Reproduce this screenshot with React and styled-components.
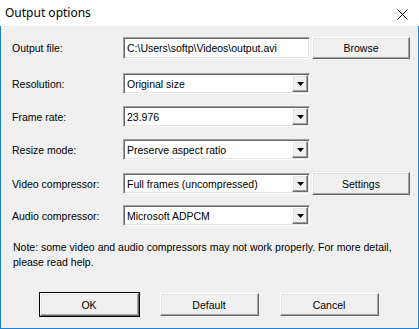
import React from 'react'
import styled, { createGlobalStyle, css } from 'styled-components'


const GlobalStyle = createGlobalStyle`
    html, body {
        margin: 0;
        padding: 0;
        background: #ffffff;
    }
`

const rows = [
    { id: 'res', label: 'Resolution:', value: 'Original size' },
    { id: 'fps', label: 'Frame rate:', value: '23.976' },
    { id: 'resize', label: 'Resize mode:', value: 'Preserve aspect ratio' },
    { id: 'video', label: 'Video compressor:', value: 'Full frames (uncompressed)', button: 'Settings' },
    { id: 'audio', label: 'Audio compressor:', value: 'Microsoft ADPCM' },
]


const App = () => {

    return (
        <>
            <GlobalStyle />
            <Window>
                <TitleBar>
                    <Title>Output options</Title>
                    <CloseIcon width="11" height="11" viewBox="0 0 11 11">
                        <path d="M0.5 0.5 L10.5 10.5 M10.5 0.5 L0.5 10.5" stroke="#000" strokeWidth="1" />
                    </CloseIcon>
                </TitleBar>
                <Body>
                    <Rows>
                        <Row $first>
                            <Label>Output file:</Label>
                            <Field $height={22}>C:\Users\softp\Videos\output.avi</Field>
                            <Button $height={22}>Browse</Button>
                        </Row>
                        {
                            rows.map(row => (
                                <Row key={row.id}>
                                    <Label>{row.label}</Label>
                                    <Combo value={row.value} />
                                    {row.button && <Button $height={23}>{row.button}</Button>}
                                </Row>
                            ))
                        }
                    </Rows>
                    <Note>
                        Note: some video and audio compressors may not work properly. For more detail,<br />
                        please read help.
                    </Note>
                    <Actions>
                        <Button $height={23} $width={99} $default>OK</Button>
                        <Button $height={23} $width={99}>Default</Button>
                        <Button $height={23} $width={99}>Cancel</Button>
                    </Actions>
                </Body>
            </Window>
        </>
    )

}


const Combo = ({ value }) => {

    return (
        <Field $height={21}>
            <ComboText>{value}</ComboText>
            <ArrowButton>
                <svg width="7" height="4" viewBox="0 0 7 4">
                    <polygon points="0,0 7,0 3.5,4" fill="#000" />
                </svg>
            </ArrowButton>
        </Field>
    )

}


const raised = css`
    border-style: solid;
    border-width: 1px;
    border-color: #ffffff #696969 #696969 #ffffff;
    box-shadow: inset -1px -1px 0 #a0a0a0, inset 1px 1px 0 #e3e3e3;
`

const Window = styled.div`
    width: 419px;
    height: 329px;
    display: flex;
    flex-direction: column;
    font-family: "Liberation Sans", Arial, sans-serif;
    font-size: 10.5px;
    color: #000;
`

const TitleBar = styled.div`
    height: 26px;
    flex: none;
    background: #ffffff;
    display: flex;
    align-items: center;
    justify-content: space-between;
    padding: 0 11px 0 5px;
`

const Title = styled.span`
    font-family: "Noto Sans", "Open Sans", sans-serif;
    font-size: 12px;
    margin-top: -1px;
`

const CloseIcon = styled.svg`
    display: block;
    margin-top: 2px;
`

const Body = styled.div`
    flex: 1;
    background: #f0f0f0;
    border: 1px solid #1883d7;
    border-top: none;
    padding: 11px 10px 0 11px;
    display: flex;
    flex-direction: column;
`

const Rows = styled.div`
    display: flex;
    flex-direction: column;
    gap: 12px;
`

const Row = styled.div`
    display: grid;
    grid-template-columns: 109px 187px 98px;
    column-gap: 2px;
    align-items: center;
    height: ${p => p.$first ? '22px' : '21px'};
    margin-bottom: ${p => p.$first ? '2px' : '0'};
`

const Label = styled.span`
    white-space: nowrap;
`

const Field = styled.div`
    box-sizing: border-box;
    height: ${p => p.$height}px;
    background: #ffffff;
    border-style: solid;
    border-width: 1px;
    border-color: #a0a0a0 #ffffff #ffffff #a0a0a0;
    box-shadow: inset 1px 1px 0 #696969, inset -1px -1px 0 #e3e3e3;
    padding: 0 2px 0 3px;
    display: flex;
    align-items: center;
    white-space: nowrap;
    overflow: hidden;
`

const ComboText = styled.span`
    flex: 1;
`

const ArrowButton = styled.div`
    box-sizing: border-box;
    width: 16px;
    height: 17px;
    margin-right: -1px;
    background: #f0f0f0;
    ${raised};
    display: flex;
    align-items: center;
    justify-content: center;

    svg {
        display: block;
    }
`

const Button = styled.div`
    box-sizing: border-box;
    height: ${p => p.$height}px;
    width: ${p => p.$width ? `${p.$width}px` : 'auto'};
    background: #f0f0f0;
    display: flex;
    align-items: center;
    justify-content: center;
    ${raised};
    ${p => p.$default && css`
        outline: 1px solid #000;
        outline-offset: 0;
    `}
`

const Note = styled.p`
    margin: 14px 0 0 1px;
    line-height: 15px;
    white-space: nowrap;
`

const Actions = styled.div`
    display: flex;
    justify-content: center;
    gap: 21px;
    margin-top: 23px;
    padding-right: 2px;
`


export default App
